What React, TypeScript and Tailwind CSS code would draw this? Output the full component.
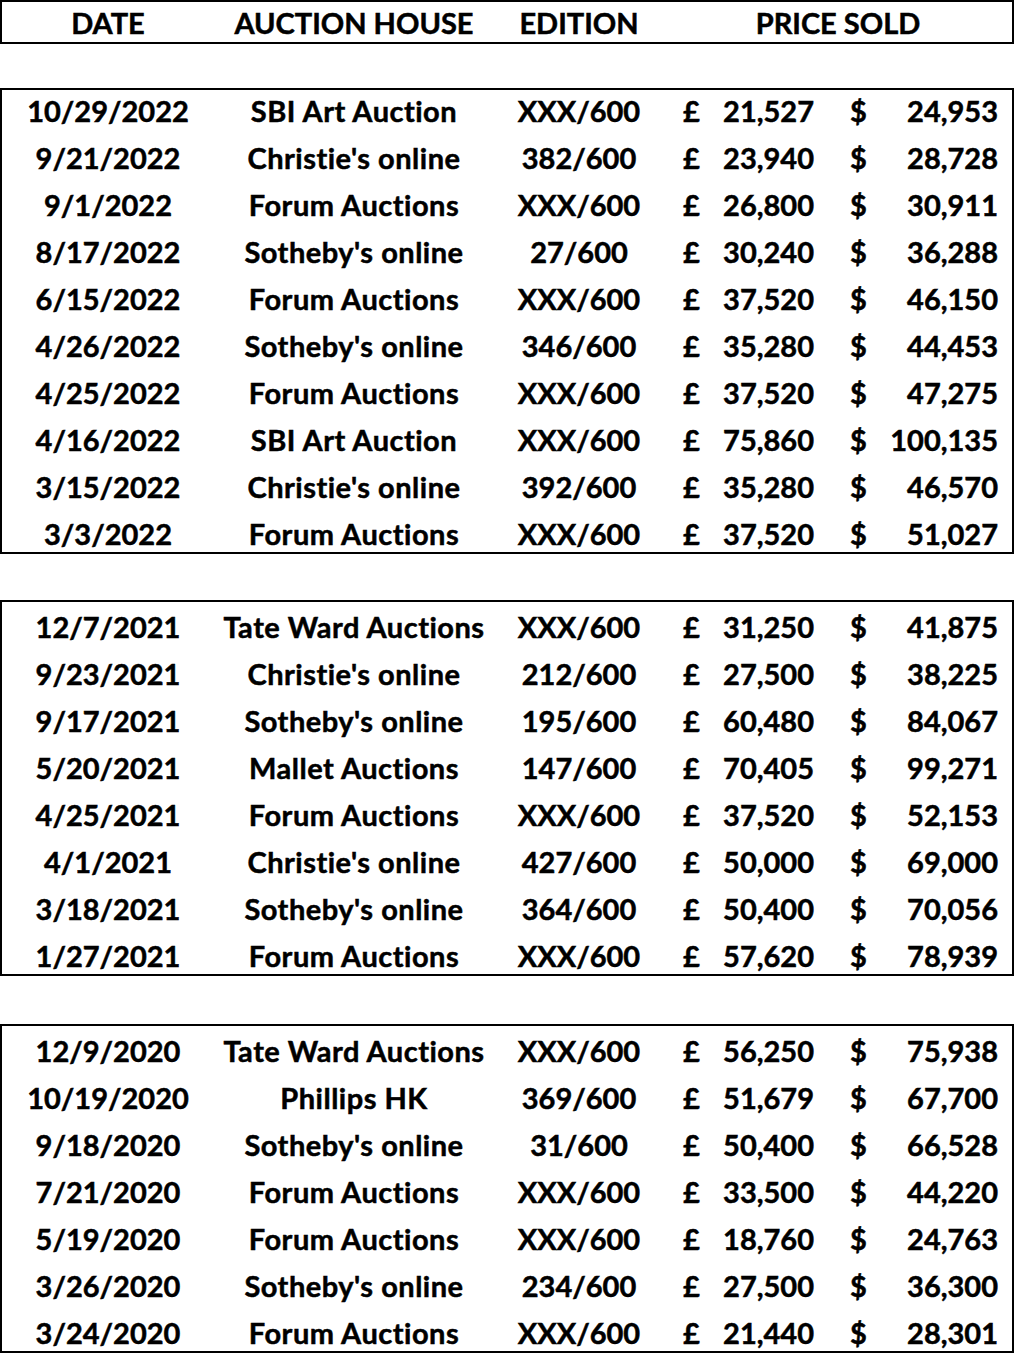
const SALES_2022 = [
  ['10/29/2022', 'SBI Art Auction', 'XXX/600', '21,527', '24,953'],
  ['9/21/2022', "Christie's online", '382/600', '23,940', '28,728'],
  ['9/1/2022', 'Forum Auctions', 'XXX/600', '26,800', '30,911'],
  ['8/17/2022', "Sotheby's online", '27/600', '30,240', '36,288'],
  ['6/15/2022', 'Forum Auctions', 'XXX/600', '37,520', '46,150'],
  ['4/26/2022', "Sotheby's online", '346/600', '35,280', '44,453'],
  ['4/25/2022', 'Forum Auctions', 'XXX/600', '37,520', '47,275'],
  ['4/16/2022', 'SBI Art Auction', 'XXX/600', '75,860', '100,135'],
  ['3/15/2022', "Christie's online", '392/600', '35,280', '46,570'],
  ['3/3/2022', 'Forum Auctions', 'XXX/600', '37,520', '51,027'],
]

const SALES_2021 = [
  ['12/7/2021', 'Tate Ward Auctions', 'XXX/600', '31,250', '41,875'],
  ['9/23/2021', "Christie's online", '212/600', '27,500', '38,225'],
  ['9/17/2021', "Sotheby's online", '195/600', '60,480', '84,067'],
  ['5/20/2021', 'Mallet Auctions', '147/600', '70,405', '99,271'],
  ['4/25/2021', 'Forum Auctions', 'XXX/600', '37,520', '52,153'],
  ['4/1/2021', "Christie's online", '427/600', '50,000', '69,000'],
  ['3/18/2021', "Sotheby's online", '364/600', '50,400', '70,056'],
  ['1/27/2021', 'Forum Auctions', 'XXX/600', '57,620', '78,939'],
]

const SALES_2020 = [
  ['12/9/2020', 'Tate Ward Auctions', 'XXX/600', '56,250', '75,938'],
  ['10/19/2020', 'Phillips HK', '369/600', '51,679', '67,700'],
  ['9/18/2020', "Sotheby's online", '31/600', '50,400', '66,528'],
  ['7/21/2020', 'Forum Auctions', 'XXX/600', '33,500', '44,220'],
  ['5/19/2020', 'Forum Auctions', 'XXX/600', '18,760', '24,763'],
  ['3/26/2020', "Sotheby's online", '234/600', '27,500', '36,300'],
  ['3/24/2020', 'Forum Auctions', 'XXX/600', '21,440', '28,301'],
]

function SaleRow({ row }: { row: string[] }) {
  const [date, house, edition, gbp, usd] = row
  return (
    <div className="grid h-[47px] grid-cols-[212px_280px_170px_56px_94px_56px_128px] items-center whitespace-nowrap">
      <div className="text-center">{date}</div>
      <div className="text-center tracking-[0.5px]">{house}</div>
      <div className="text-center">{edition}</div>
      <div className="pl-[19px]">£</div>
      <div className="text-right">{gbp}</div>
      <div className="pl-[36px]">$</div>
      <div className="text-right">{usd}</div>
    </div>
  )
}

function SalesBlock({ rows, className }: { rows: string[][]; className: string }) {
  return (
    <div className={`overflow-hidden border-2 border-black ${className}`}>
      {rows.map((row, i) => (
        <SaleRow key={i} row={row} />
      ))}
    </div>
  )
}

export default function App() {
  return (
    <div
      className="w-[1014px] bg-white text-[29px] font-bold leading-none text-black [-webkit-text-stroke:0.5px_black]"
      style={{ fontFamily: 'Lato, "Open Sans", sans-serif' }}
    >
      {/* Column headings */}
      <div className="grid h-[44px] grid-cols-[212px_280px_170px_1fr] items-center border-2 border-black">
        <div className="text-center">DATE</div>
        <div className="text-center">AUCTION HOUSE</div>
        <div className="text-center">EDITION</div>
        <div className="text-center">PRICE SOLD</div>
      </div>

      <SalesBlock rows={SALES_2022} className="mt-[44px] h-[466px] [&>div:first-child]:-mt-[3px]" />
      <SalesBlock rows={SALES_2021} className="mt-[46px] h-[376px] pt-[1px]" />
      <SalesBlock rows={SALES_2020} className="mt-[48px] h-[329px] pt-[1px]" />
    </div>
  )
}
